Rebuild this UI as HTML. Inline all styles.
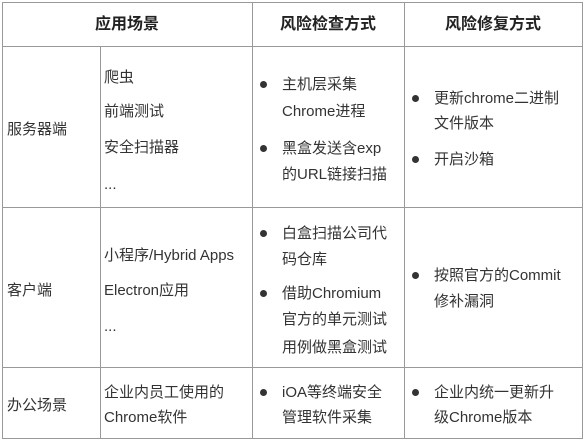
<html><head><style>
body{margin:0;width:586px;height:441px;background:#fff;position:relative;font-family:"Liberation Sans","Noto Sans CJK SC",sans-serif;color:#333;font-size:15px;overflow:hidden}
.l{position:absolute;background:#999}
.t{position:absolute;line-height:20px;white-space:nowrap;margin-top:2px}
.h{font-weight:bold;color:#222;font-size:16px}
.b{position:absolute;width:7px;height:7px;border-radius:50%;background:#333;margin-top:1px}
</style></head><body>
<div class="l" style="left:2px;top:2px;width:581px;height:1px"></div>
<div class="l" style="left:2px;top:46px;width:581px;height:1px"></div>
<div class="l" style="left:2px;top:207px;width:581px;height:1px"></div>
<div class="l" style="left:2px;top:367px;width:581px;height:1px"></div>
<div class="l" style="left:2px;top:438px;width:581px;height:1px"></div>
<div class="l" style="left:2px;top:2px;width:1px;height:437px"></div>
<div class="l" style="left:100px;top:46px;width:1px;height:393px"></div>
<div class="l" style="left:252px;top:2px;width:1px;height:437px"></div>
<div class="l" style="left:404px;top:2px;width:1px;height:437px"></div>
<div class="l" style="left:582px;top:2px;width:1px;height:437px"></div>

<div class="t h" style="left:2px;width:250px;text-align:center;top:13px">应用场景</div>
<div class="t h" style="left:252px;width:152px;text-align:center;top:13px">风险检查方式</div>
<div class="t h" style="left:404px;width:178px;text-align:center;top:13px">风险修复方式</div>

<div class="t" style="left:7px;top:118px">服务器端</div>
<div class="t" style="left:104px;top:66px">爬虫</div>
<div class="t" style="left:104px;top:100px">前端测试</div>
<div class="t" style="left:104px;top:136px">安全扫描器</div>
<div class="t" style="left:104px;top:173px">...</div>
<div class="b" style="left:260px;top:80px"></div>
<div class="t" style="left:282px;top:73px">主机层采集</div>
<div class="t" style="left:282px;top:100px">Chrome进程</div>
<div class="b" style="left:260px;top:144px"></div>
<div class="t" style="left:282px;top:137px">黑盒发送含exp</div>
<div class="t" style="left:282px;top:163px">的URL链接扫描</div>
<div class="b" style="left:412px;top:94px"></div>
<div class="t" style="left:434px;top:87px">更新chrome二进制</div>
<div class="t" style="left:434px;top:112px">文件版本</div>
<div class="b" style="left:412px;top:155px"></div>
<div class="t" style="left:434px;top:148px">开启沙箱</div>

<div class="t" style="left:7px;top:279px">客户端</div>
<div class="t" style="left:104px;top:244px">小程序/Hybrid Apps</div>
<div class="t" style="left:104px;top:279px">Electron应用</div>
<div class="t" style="left:104px;top:315px">...</div>
<div class="b" style="left:260px;top:229px"></div>
<div class="t" style="left:282px;top:222px">白盒扫描公司代</div>
<div class="t" style="left:282px;top:248px">码仓库</div>
<div class="b" style="left:260px;top:289px"></div>
<div class="t" style="left:282px;top:282px">借助Chromium</div>
<div class="t" style="left:282px;top:308px">官方的单元测试</div>
<div class="t" style="left:282px;top:336px">用例做黑盒测试</div>
<div class="b" style="left:412px;top:271px"></div>
<div class="t" style="left:434px;top:264px">按照官方的Commit</div>
<div class="t" style="left:434px;top:290px">修补漏洞</div>

<div class="t" style="left:7px;top:394px">办公场景</div>
<div class="t" style="left:104px;top:381px">企业内员工使用的</div>
<div class="t" style="left:104px;top:406px">Chrome软件</div>
<div class="b" style="left:260px;top:388px"></div>
<div class="t" style="left:282px;top:381px">iOA等终端安全</div>
<div class="t" style="left:282px;top:406px">管理软件采集</div>
<div class="b" style="left:412px;top:388px"></div>
<div class="t" style="left:434px;top:381px">企业内统一更新升</div>
<div class="t" style="left:434px;top:406px">级Chrome版本</div>
</body></html>
